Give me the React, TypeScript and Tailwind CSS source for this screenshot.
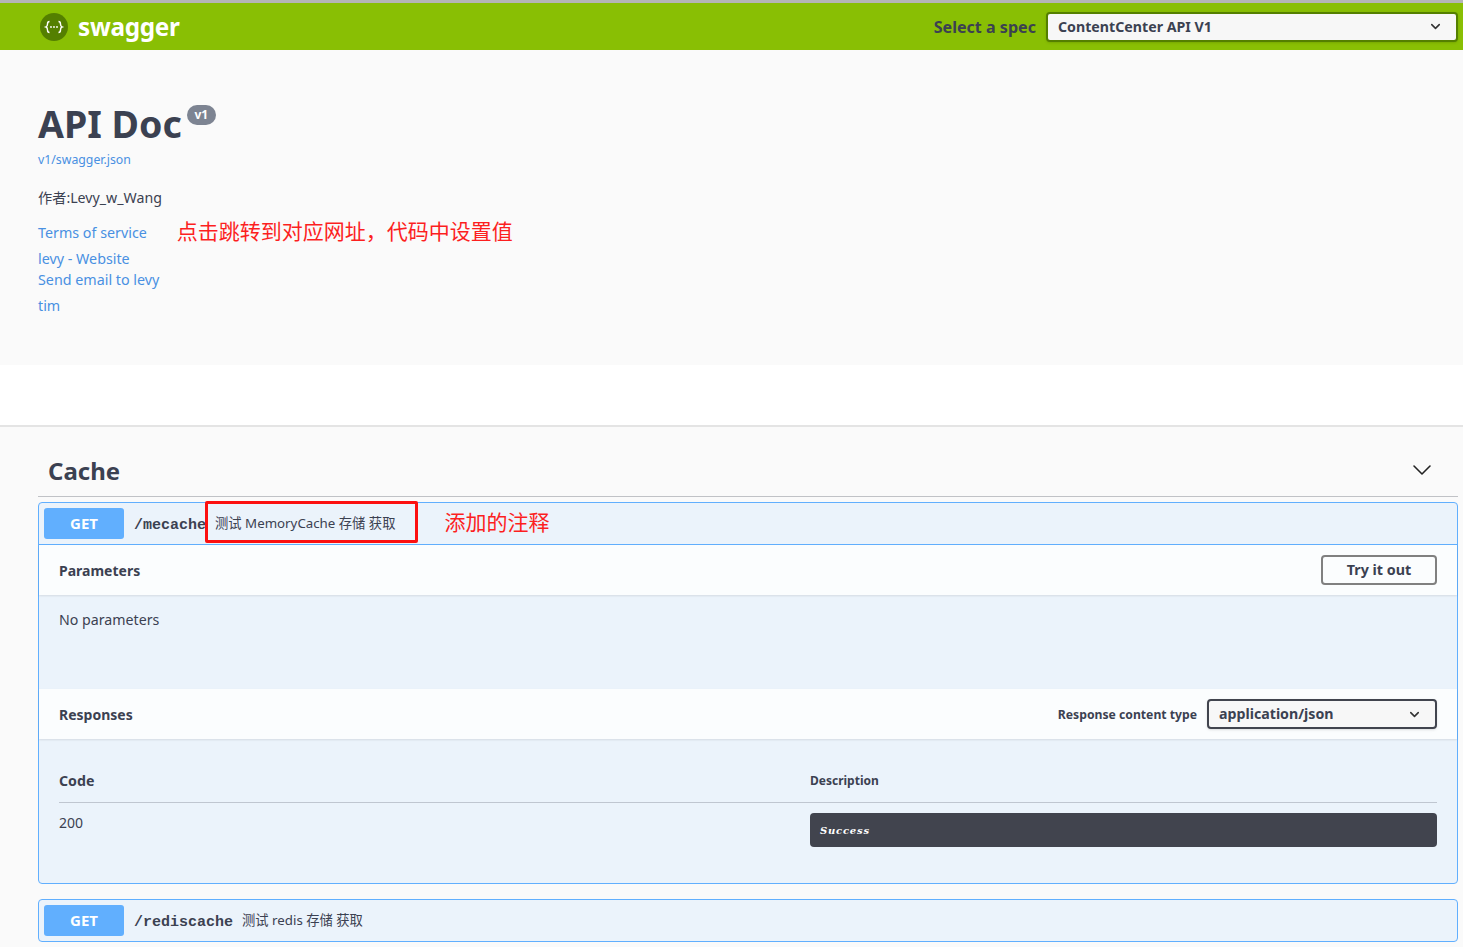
import React from "react";
import { ChevronDown } from "lucide-react";

const cjk = "font-['Noto_Sans','Noto_Sans_CJK_SC',sans-serif]";
const mono = "font-['Liberation_Mono','Noto_Sans_CJK_SC',monospace]";

const Logo = () => (
  <svg width="28" height="28" viewBox="0 0 28 28" className="shrink-0">
    <circle cx="14" cy="14" r="14" fill="#547f00" />
    <path
      d="M9.5 8.5c-2 0-2 1-2 2.500s0 2.500-1.500 3c1.500.5 1.500 1.500 1.500 3s0 2.500 2 2.500M18.500 8.500c2 0 2 1 2 2.500s0 2.500 1.500 3c-1.500.5-1.500 1.500-1.500 3s0 2.500-2 2.500"
      fill="none"
      stroke="#fff"
      strokeWidth="1.400"
    />
    <circle cx="11" cy="14" r="0.900" fill="#fff" />
    <circle cx="14" cy="14" r="0.900" fill="#fff" />
    <circle cx="17" cy="14" r="0.900" fill="#fff" />
  </svg>
);

const TopBar = () => (
  <div className="h-[50px] border-t-[3px] border-[#b5b5b5] bg-[#89bf04] flex items-center pl-10 pr-[5px]">
    <Logo />
    <span className="ml-[10px] pt-[2px] text-[24.300px] leading-none font-bold text-white tracking-[-0.3px]">swagger</span>
    <span className="ml-auto pt-[1px] text-[16.100px] font-bold text-[#3b4151]">Select a spec</span>
    <div className="ml-[10px] w-[412px] h-[30px] rounded border-2 border-[#547f00] bg-[#f7f7f7] flex items-center justify-between pl-[10px] pr-[13px] shadow-sm">
      <span className="text-[14.200px] font-bold text-[#3b4151]">ContentCenter API V1</span>
      <ChevronDown size={15} strokeWidth={2.500} className="text-[#333]" />
    </div>
  </div>
);

const InfoLink = ({ children, className }: { children: React.ReactNode; className: string }) => (
  <a className={`block text-[14.300px] text-[#4990e2] ${className}`}>{children}</a>
);

const Info = () => (
  <div className="h-[315px] bg-[#fafafa] pl-[38px] pt-[51px]">
    <div className="flex items-start">
      <h1 className="text-[37.500px] leading-[46px] font-bold text-[#3b4151]">API Doc</h1>
      <span className="ml-[5px] mt-[4px] w-[29px] h-5 rounded-[10px] bg-[#7d8492] text-white text-[12px] font-bold flex items-center justify-center">
        v1
      </span>
    </div>
    <a className="block mt-[4px] text-[12.300px] leading-[18px] text-[#4990e2]">v1/swagger.json</a>
    <p className="mt-[19px] text-[14.200px] leading-[20px] text-[#3b4151]">作者:Levy_w_Wang</p>
    <div className="mt-[11px] flex items-center h-[26px]">
      <InfoLink className="pt-[1px] leading-[20px]">Terms of service</InfoLink>
      <span className="ml-[30px] text-[21px] text-[#fc1f1f] leading-[26px] -mt-[3px]">点击跳转到对应网址，代码中设置值</span>
    </div>
    <InfoLink className="mt-[3px] leading-[22px]">levy - Website</InfoLink>
    <InfoLink className="-mt-[1px] leading-[22px]">Send email to levy</InfoLink>
    <InfoLink className="mt-[5px] leading-[20px]">tim</InfoLink>
  </div>
);

const GetBadge = () => (
  <span className="w-20 h-[31px] rounded-[3px] bg-[#61affe] text-white text-[15px] font-bold flex items-center justify-center shrink-0">
    GET
  </span>
);

const Operation = () => (
  <div className="relative mt-[5px] rounded border border-[#61affe] bg-[#ebf3fb] h-[382px] flex flex-col">
    <div className="h-[42px] flex items-center pl-[5px] border-b border-[#61affe] shrink-0">
      <GetBadge />
      <span className={`ml-[10px] pt-[5px] text-[15px] font-bold text-[#3b4151] ${mono}`}>/mecache</span>
      <span className="ml-[9px] pt-[1px] text-[13.300px] text-[#3b4151]">测试 MemoryCache 存储 获取</span>
      <span className="ml-[49px] -mt-[1px] text-[21px] text-[#fc1f1f]">添加的注释</span>
    </div>
    {/* red box the author drew over the screenshot */}
    <div className="absolute left-[166px] top-[-2px] w-[213px] h-[42px] border-[3px] border-[#fc1010] rounded-[2px]" />

    <div className="h-[50px] bg-white/80 flex items-center justify-between px-5 shadow-[0_1px_2px_rgba(0,0,0,0.1)] shrink-0">
      <span className="text-[14px] font-bold text-[#3b4151]">Parameters</span>
      <span className="w-[116px] h-[30px] rounded border-2 border-[#808080] text-[14.300px] font-bold text-[#3b4151] flex items-center justify-center">
        Try it out
      </span>
    </div>
    <div className="h-[94px] pl-5 pt-[15px] text-[14.200px] leading-[20px] text-[#3b4151] shrink-0">No parameters</div>

    <div className="h-[50px] bg-white/80 flex items-center px-5 shadow-[0_1px_2px_rgba(0,0,0,0.1)] shrink-0">
      <span className="text-[14px] font-bold text-[#3b4151]">Responses</span>
      <span className="ml-auto pt-[3px] text-[12.200px] font-bold text-[#3b4151]">Response content type</span>
      <div className="ml-[10px] w-[230px] h-[30px] rounded border-2 border-[#41444e] bg-[#f7f7f7] flex items-center justify-between pl-[10px] pr-[13px] shadow-sm">
        <span className="text-[14.200px] font-bold text-[#3b4151]">application/json</span>
        <ChevronDown size={15} strokeWidth={2.500} className="text-[#333]" />
      </div>
    </div>

    <div className="px-5 pt-[31px]">
      <div className="flex items-center h-[33px] pb-[11px] border-b border-[#3b4151]/25">
        <span className="w-[751px] text-[14.200px] font-bold text-[#3b4151]">Code</span>
        <span className="text-[12px] font-bold text-[#3b4151]">Description</span>
      </div>
      <div className="flex pt-[10px]">
        <span className="w-[751px] text-[14px] leading-[20px] text-[#3b4151]">200</span>
        <div className="flex-1 h-[34px] rounded bg-[#41444e] flex items-center pl-[10px]">
          <span className="text-[10px] font-bold italic text-white font-['DejaVu_Serif',serif] tracking-[0.8px]">Success</span>
        </div>
      </div>
    </div>
  </div>
);

const Collapsed = () => (
  <div className="mt-[15px] rounded border border-[#61affe] bg-[#ebf3fb] h-[43px] flex items-center pl-[5px]">
    <GetBadge />
    <span className={`ml-[10px] pt-[5px] text-[15px] font-bold text-[#3b4151] ${mono}`}>/rediscache</span>
    <span className="ml-[9px] pt-[1px] text-[13.300px] text-[#3b4151]">测试 redis 存储 获取</span>
  </div>
);

export default function App() {
  return (
    <div className={`h-[947px] overflow-hidden bg-[#fafafa] ${cjk}`}>
      <TopBar />
      <Info />
      <div className="h-[60px] bg-white" />
      <div className="h-[2px] bg-[#e4e4e4]" />
      <div className="pl-[38px] pr-[5px]">
        <div className="h-[70px] border-b border-[#3b4151]/30 flex items-center justify-between pl-[10px] pr-5 pt-[18px]">
          <span className="text-[24px] font-bold text-[#3b4151]">Cache</span>
          <ChevronDown size={32} strokeWidth={1.200} className="text-[#222] -mt-[1px]" />
        </div>
        <Operation />
        <Collapsed />
      </div>
    </div>
  );
}
